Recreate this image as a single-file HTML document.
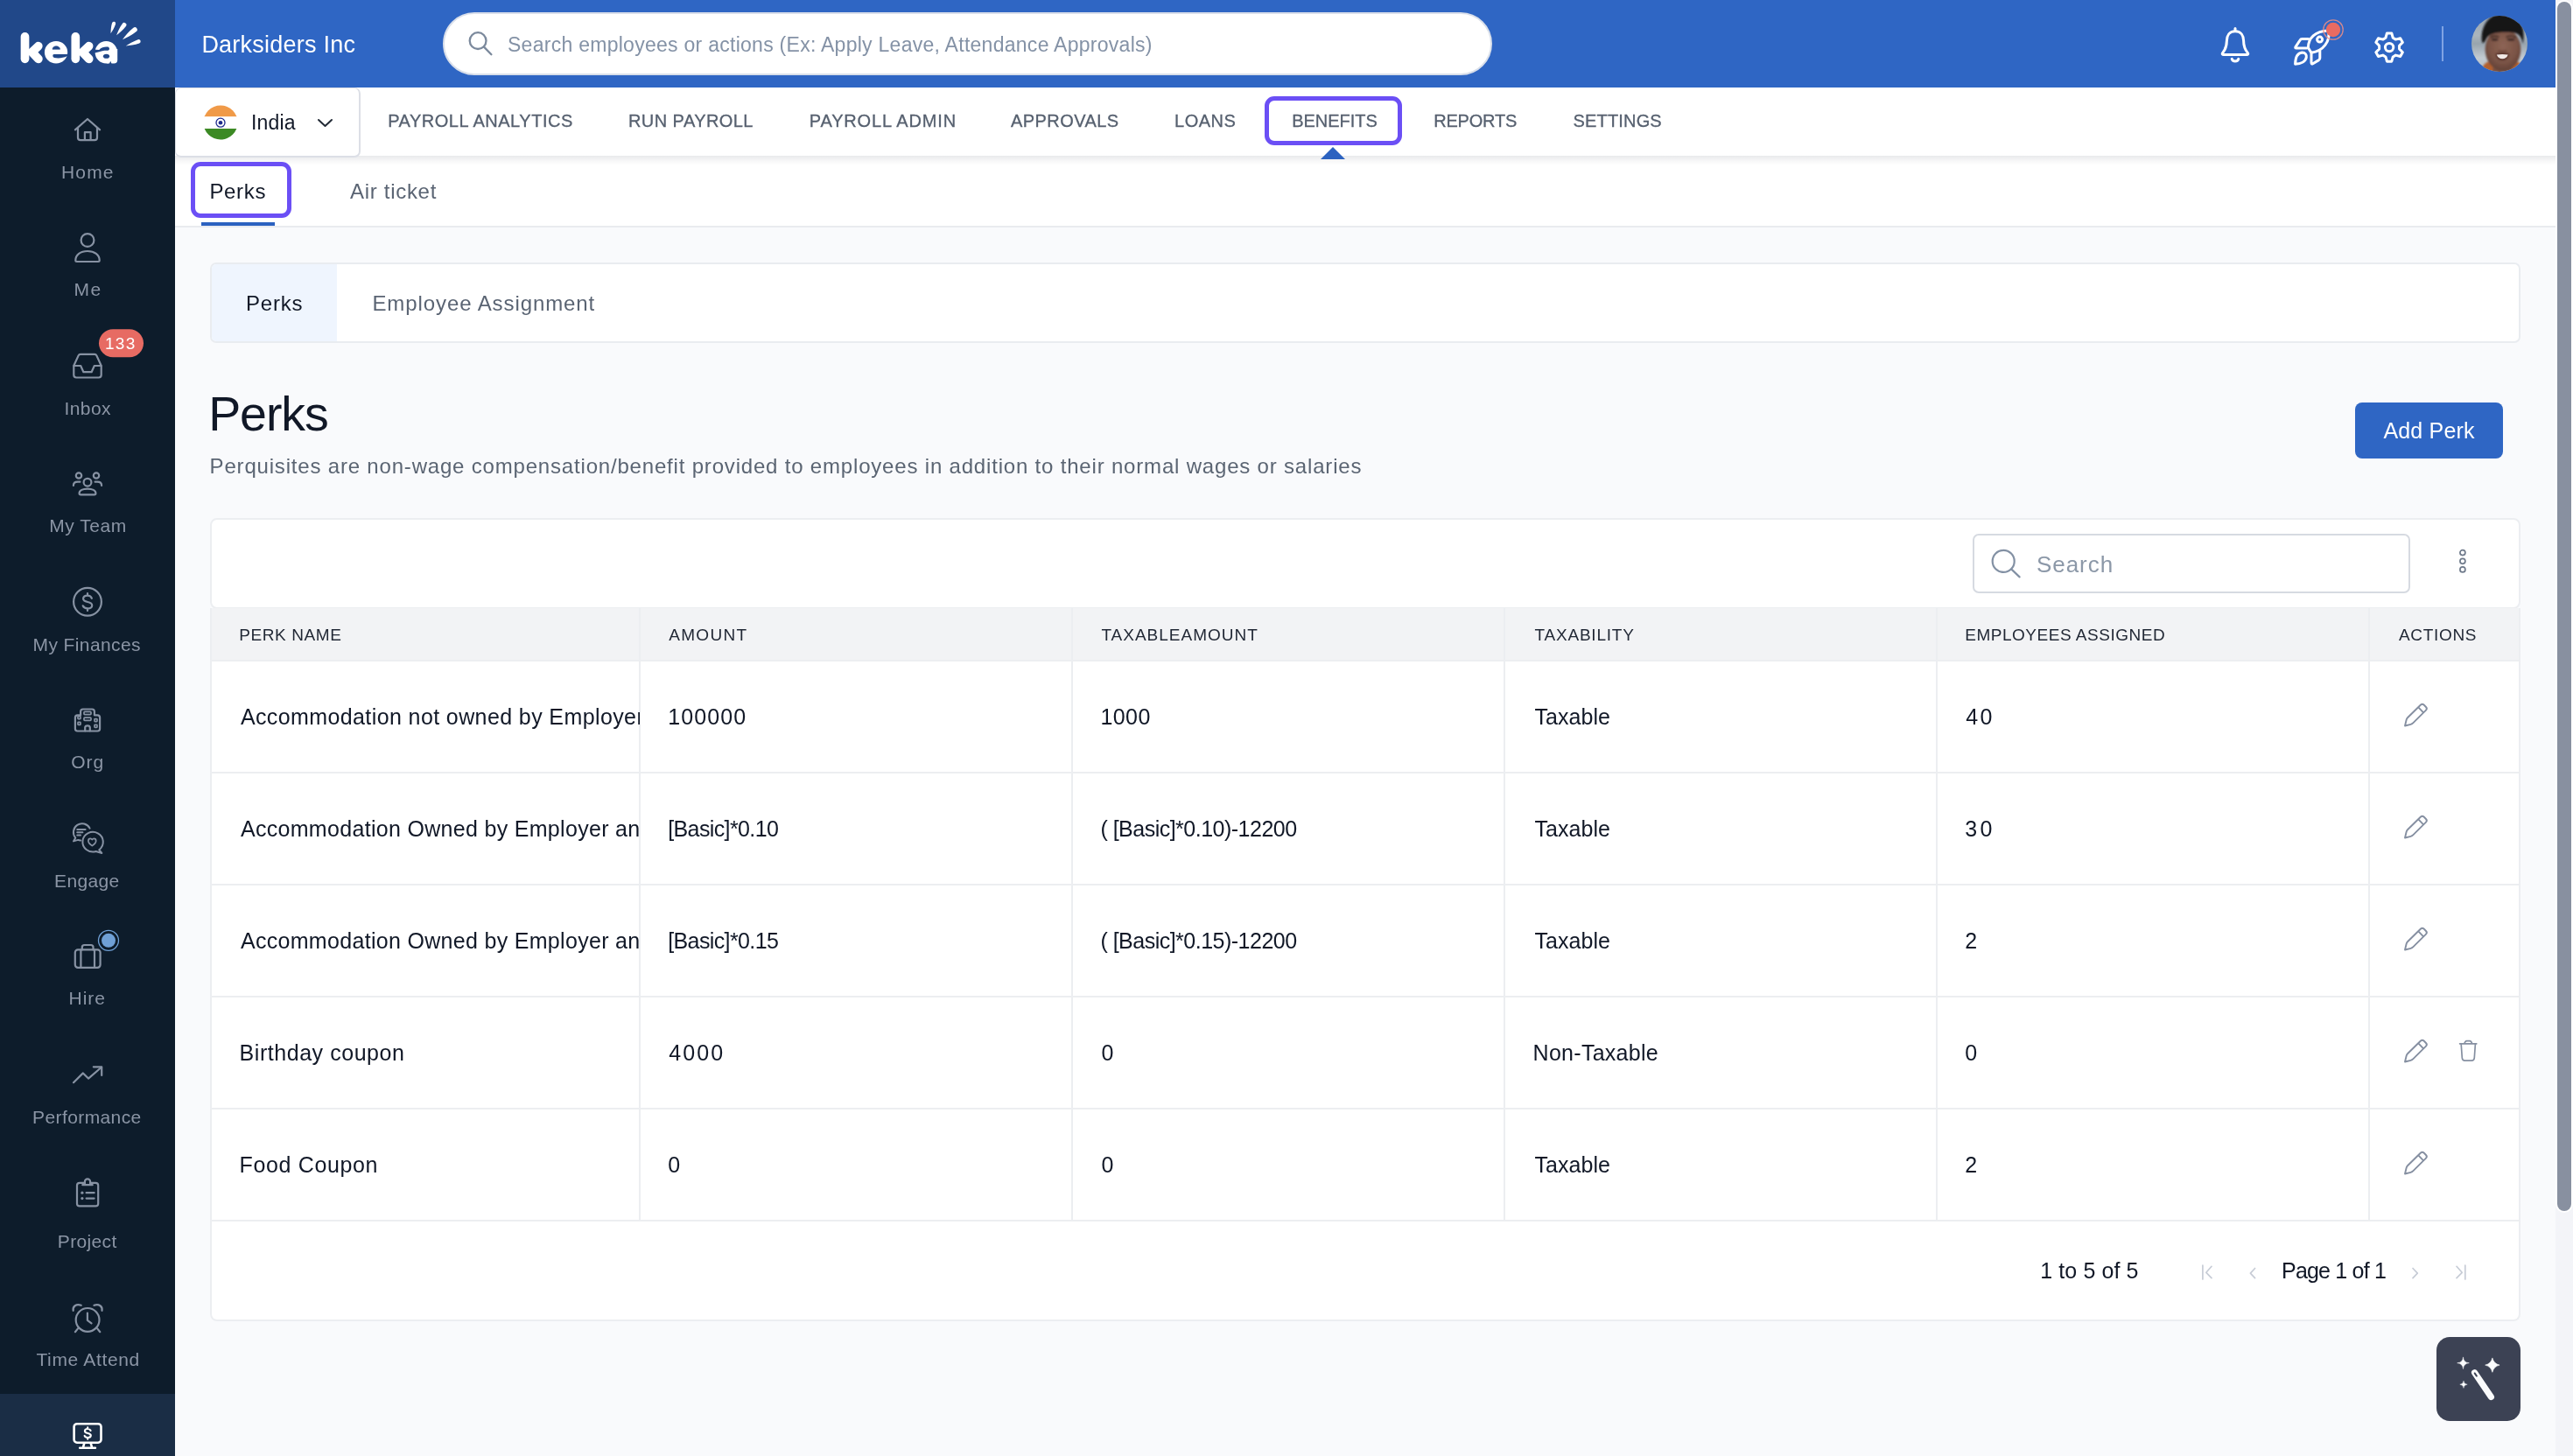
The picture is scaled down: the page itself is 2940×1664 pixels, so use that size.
<!DOCTYPE html>
<html lang="en">
<head>
<meta charset="utf-8">
<title>Keka - Payroll - Benefits - Perks</title>
<style>
*{box-sizing:border-box;margin:0;padding:0}
html,body{width:2940px;height:1664px;overflow:hidden}
body{position:relative;background:#f9fafc;font-family:"Liberation Sans",sans-serif;-webkit-font-smoothing:antialiased}
.a{position:absolute}
.t{position:absolute;white-space:nowrap;line-height:1;font-kerning:normal}
.t.clip{overflow:hidden;height:32px}
svg{position:absolute;overflow:visible}
.si{fill:none;stroke:#8792a3;stroke-width:2.2;stroke-linecap:round;stroke-linejoin:round}
.vl{position:absolute;width:2px;background:#eceef1;top:695px;height:700px}
.hl{position:absolute;height:2px;background:#eceef1;left:241px;width:2638px}
</style>
</head>
<body>

<!-- ============ SIDEBAR ============ -->
<div class="a" style="left:0;top:0;width:200px;height:1664px;background:#0d1c2b"></div>
<div class="a" style="left:0;top:0;width:200px;height:100px;background:#214889"></div>
<div class="a" style="left:0;top:1593px;width:200px;height:71px;background:#1a2d45"></div>
<svg style="left:0;top:0" width="200" height="100" viewBox="0 0 200 100">
<g fill="none" stroke="#fff" stroke-width="9.7" stroke-linecap="round" stroke-linejoin="round"><path d="M28.5 41.9 V67.3" /><path d="M43.8 52.7 L36.6 59.6 L43.9 67.4" /><path d="M86.3 41.9 V67.3" /><path d="M101.6 52.7 L94.4 59.6 L101.7 67.4" /></g>
<ellipse cx="64.05" cy="59.75" rx="13.15" ry="12.75" fill="#fff"/>
<path d="M60 56.3 C60 51.6 68.5 51.6 68.5 56.3 Z" fill="#214889" stroke="#214889" stroke-width=".6" stroke-linejoin="round"/>
<path d="M61.6 62.1 H79 V64 L76.4 64.3 C72.5 66.5 66 66.8 62 66 C59.9 65.4 59.9 62.1 61.6 62.1 Z" fill="#214889"/>
<ellipse cx="121.3" cy="59.7" rx="12.7" ry="12.75" fill="#fff"/>
<path d="M122 56 H134.2 V68.4 Q134.2 72.4 130.2 72.4 H122 Z" fill="#fff"/>
<path d="M106 56.6 L113.2 56.9 C116 53.8 120.5 53.1 123.2 53.6 C125.6 54.2 125.6 57.7 123.2 57.7 C119 57.5 115.5 58.2 113.4 59.2 L106 61 Z" fill="#214889"/>
<ellipse cx="121.5" cy="64.3" rx="3.6" ry="2.55" fill="#214889"/>
<path d="M124.6 73.5 L126.2 69.8 L127.8 73.5 Z" fill="#214889"/>
<g fill="#fff">
<path d="M126.50 38.20 C128.27 35.52 130.81 31.46 132.08 27.43 A2.1 2.1 0 0 0 128.07 26.18 C126.81 30.20 126.58 34.99 126.50 38.20 Z"/>
<path d="M133.10 40.30 C136.21 37.89 140.77 34.21 143.91 30.00 A2.5 2.5 0 0 0 139.90 27.01 C136.76 31.21 134.52 36.64 133.10 40.30 Z"/>
<path d="M140.00 45.20 C144.27 43.22 150.60 40.16 155.78 36.00 A2.7 2.7 0 0 0 152.40 31.78 C147.22 35.94 142.85 41.46 140.00 45.20 Z"/>
<path d="M143.80 52.50 C147.82 52.11 153.80 51.43 159.19 49.53 A2.3 2.3 0 0 0 157.67 45.19 C152.28 47.08 147.18 50.29 143.80 52.50 Z"/>
</g></svg>
<svg style="left:0;top:0" width="200" height="1664" viewBox="0 0 200 1664">
<g class="si">
<!-- home -->
<path d="M85.9 148.3 L100 136 L114.1 148.3"/>
<path d="M89 146 V157.3 Q89 160.2 91.9 160.2 H108.1 Q111 160.2 111 157.3 V146"/>
<path d="M96.9 160 V151.2 H103.6 V160"/>
<!-- me -->
<circle cx="100" cy="274.5" r="7.4"/>
<path d="M86.3 297.6 C86.3 291 92 287 100 287 C108 287 113.7 291 113.7 297.6 Q113.7 299 112.2 299 H87.8 Q86.3 299 86.3 297.6 Z"/>
<!-- inbox -->
<path d="M84.3 418 L89.6 406.4 Q90.3 404.8 92 404.8 H108 Q109.7 404.8 110.4 406.4 L115.7 418 V428.6 Q115.7 431.5 112.8 431.5 H87.2 Q84.3 431.5 84.3 428.6 Z"/>
<path d="M84.5 418 H92.2 L95.4 425.2 H104.6 L107.8 418 H115.5"/>
<!-- my team -->
<circle cx="90" cy="543.5" r="3.2"/><circle cx="110" cy="543.5" r="3.2"/>
<circle cx="100" cy="551.2" r="4.4"/>
<path d="M90.6 563.8 C90.6 560.6 94.5 558.6 100 558.6 C105.5 558.6 109.4 560.6 109.4 563.8 Q109.4 565.4 107.8 565.4 H92.2 Q90.6 565.4 90.6 563.8 Z"/>
<path d="M83.9 555 C83.9 552.2 86 550.7 88.8 550.7 H91.4"/><path d="M116.1 555 C116.1 552.2 114 550.7 111.2 550.7 H108.6"/>
<!-- my finances -->
<circle cx="100" cy="687.8" r="15.9"/>
<path d="M104.9 683.8 C104.1 681.7 102.3 680.7 100 680.7 C97 680.7 95.1 682.1 95.1 684.3 C95.1 689.4 105.2 686.5 105.2 691.7 C105.2 694 103 695.4 100 695.4 C97.5 695.4 95.6 694.3 94.7 692.3 M100 678.2 V680.7 M100 695.4 V697.9"/>
<!-- org -->
<path d="M85.9 832.8 V820 Q85.9 817.3 88.6 817.3 H92.1 V813.2 Q92.1 810.5 94.8 810.5 H105.2 Q107.9 810.5 107.9 813.2 V817.3 H111.4 Q114.1 817.3 114.1 820 V832.8 Q114.1 835.5 111.4 835.5 H88.6 Q85.9 835.5 85.9 832.8 Z"/>
<path d="M97.2 835.3 V831.6 Q97.2 829.3 100 829.3 Q102.8 829.3 102.8 831.6 V835.3"/>
</g>
<g fill="none" stroke="#8792a3" stroke-width="1.7" stroke-linejoin="round">
<rect x="96" y="813.4" width="8" height="3.2" rx=".8"/><rect x="96" y="820.2" width="8" height="3.2" rx=".8"/>
<rect x="89" y="818.6" width="3" height="3" rx=".6"/><rect x="89" y="825.4" width="3" height="3" rx=".6"/>
<rect x="108" y="821.6" width="3" height="3" rx=".6"/><rect x="108" y="828.4" width="3" height="3" rx=".6"/>
</g>
<g class="si" style="stroke-width:2">
<!-- engage -->
<path d="M102.6 946.6 A9.9 9.9 0 1 0 86.3 957.6 L84 961.4 L89.3 959.9 Q90.6 960.6 92.2 960.5"/>
<path d="M88.2 948 H97.6 M88.2 951.3 H94.4 M88.2 954.6 H92"/>
<path d="M113.2 971.2 A11.7 11.3 0 1 0 109.6 973 L116.3 975 L113.2 971.2 Z"/>
<path d="M105.3 966.6 C102.6 964.8 100.9 963 100.9 961 C100.9 959.4 102.1 958.4 103.3 958.4 C104.2 958.4 104.9 958.9 105.3 959.6 C105.7 958.9 106.4 958.4 107.3 958.4 C108.5 958.4 109.7 959.4 109.7 961 C109.7 963 108 964.8 105.3 966.6 Z" style="stroke-width:1.7"/>
</g>
<g class="si">
<!-- hire -->
<rect x="85.8" y="1085.4" width="28.8" height="20.4" rx="3.2"/>
<path d="M93.8 1085.4 V1082.6 Q93.8 1080 96.4 1080 H103.9 Q106.5 1080 106.5 1082.6 V1085.4"/>
<path d="M92.4 1085.6 V1105.6 M108 1085.6 V1105.6"/>
<!-- performance -->
<path d="M84 1237.2 L94.9 1226.4 L101 1232.6 L115.6 1220"/>
<path d="M106.8 1219.3 H116.2 V1229"/>
<!-- project -->
<path d="M96.6 1351.8 H91 Q88 1351.8 88 1354.8 V1375.4 Q88 1378.4 91 1378.4 H109.2 Q112.2 1378.4 112.2 1375.4 V1354.8 Q112.2 1351.8 109.2 1351.8 H103.4"/>
<path d="M94.3 1354.2 H105.7 M96.9 1353.6 V1350.4 A3.1 3.1 0 0 1 103.1 1350.4 V1353.6"/>
<path d="M98.6 1363.2 H107.6 M98.6 1369.6 H107.6"/>
<!-- time attend -->
<circle cx="100.1" cy="1508.4" r="13.4"/>
<path d="M83.7 1497.8 C82.8 1493.2 87 1489.6 92.7 1491.8"/><path d="M116.5 1497.8 C117.4 1493.2 113.2 1489.6 107.5 1491.8"/>
<path d="M89 1518.4 L85.9 1522.2 M111.2 1518.4 L114.3 1522.2"/>
<path d="M99.9 1500.6 V1508.9 L104.5 1512.4"/>
</g>
<circle cx="93.9" cy="1363.2" r="1.6" fill="#8792a3"/><circle cx="93.9" cy="1369.6" r="1.6" fill="#8792a3"/>
<!-- inbox badge -->
<rect x="113" y="376.2" width="51" height="32" rx="16" fill="#e76b63"/>
<!-- hire dot -->
<circle cx="124" cy="1074.8" r="8" fill="#6fa0d6"/><circle cx="124" cy="1074.8" r="11.5" fill="none" stroke="#6fa0d6" stroke-width="1.3"/>
<!-- payroll (active) -->
<g fill="none" stroke="#fff" stroke-width="2.6" stroke-linecap="round" stroke-linejoin="round">
<rect x="84.6" y="1627.2" width="30.9" height="21.5" rx="3.4"/>
<path d="M96.3 1649.4 L94.9 1654.4 M103.7 1649.4 L105.1 1654.4 M91.2 1654.8 H108.9"/>
<path d="M103.6 1635 C103 1633.6 101.7 1633 100.2 1633 C98.2 1633 96.9 1634 96.9 1635.5 C96.9 1638.9 103.8 1637 103.8 1640.5 C103.8 1642.1 102.3 1643 100.2 1643 C98.5 1643 97.2 1642.3 96.6 1640.9 M100.2 1631.4 V1633 M100.2 1643 V1644.8" style="stroke-width:2.1"/>
</g>
</svg>


<!-- ============ TOP HEADER ============ -->
<div class="a" style="left:200px;top:0;width:2720px;height:100px;background:#2f66c4"></div>
<div class="a" style="left:506px;top:14px;width:1199px;height:72px;border-radius:36px;background:#fff;border:2px solid #d9dfea"></div>
<!-- global search icon -->
<svg style="left:530px;top:32px" width="40" height="40" viewBox="0 0 40 40"><circle cx="16.1" cy="14.6" r="9.4" fill="none" stroke="#7b899c" stroke-width="2.3"/><path d="M23 21.6 L31.4 30.2" stroke="#7b899c" stroke-width="2.3" stroke-linecap="round"/></svg>
<!-- bell -->
<svg style="left:2536px;top:30px" width="36" height="44" viewBox="0 0 36 44" fill="none" stroke="#fff" stroke-width="3" stroke-linecap="round" stroke-linejoin="round">
<path d="M18 2.6 V5.5"/>
<path d="M18 5.8 C11.2 5.8 8.4 11 8.4 16.5 C8.4 23.5 6.6 27 3.6 30.6 C2.9 31.6 3.4 32.6 4.8 32.6 H31.2 C32.6 32.6 33.1 31.6 32.4 30.6 C29.4 27 27.6 23.5 27.6 16.5 C27.6 11 24.8 5.8 18 5.8 Z"/>
<path d="M14.2 37.4 C15 40.8 21 40.8 21.8 37.4"/>
</svg>
<!-- rocket -->
<svg style="left:2620px;top:30px" width="46" height="46" viewBox="0 0 46 46" fill="none" stroke="#fff" stroke-width="3" stroke-linecap="round" stroke-linejoin="round">
<path d="M17.4 24.4 C17.5 13.5 25 5.5 40.7 4.9 C42.8 17 35 28.5 20.9 30.2 Z"/>
<circle cx="30.6" cy="15.1" r="3"/>
<path d="M17.8 14.6 H10.4 Q8.8 14.6 8 16 L3 23.6 Q2.2 25 3.8 25 H15.6"/>
<path d="M21 31.2 V41.6 Q21 43.8 22.8 42.8 L29.6 38.6 Q30.8 37.8 30.8 36.2 V28"/>
<path d="M2.6 43.2 C2.8 36 5 30.5 10.5 30 C14 30 15.8 32.5 15.3 35.5 C14.5 40 9.5 43 2.6 43.2 Z"/>
</svg>
<svg style="left:2650px;top:18px" width="32" height="32" viewBox="0 0 32 32"><circle cx="16" cy="16" r="8.2" fill="#e96b62"/><circle cx="16" cy="16" r="11.2" fill="none" stroke="#ef8f86" stroke-opacity=".85" stroke-width="1.3"/></svg>
<!-- gear -->
<svg style="left:2710px;top:34px" width="40" height="40" viewBox="0 0 40 40" fill="none" stroke="#fff" stroke-width="3" stroke-linejoin="round">
<path d="M24.26 9.27 L22.79 4.02 L17.41 4.02 L15.94 9.27 L12.80 11.09 L7.52 9.73 L4.83 14.39 L8.64 18.29 L8.64 21.91 L4.83 25.81 L7.52 30.47 L12.80 29.11 L15.94 30.93 L17.41 36.18 L22.79 36.18 L24.26 30.93 L27.40 29.11 L32.68 30.47 L35.37 25.81 L31.56 21.91 L31.56 18.29 L35.37 14.39 L32.68 9.73 L27.40 11.09 Z"/><circle cx="20.1" cy="20.1" r="4.7"/>
</svg>
<div class="a" style="left:2790px;top:30px;width:2px;height:40px;background:#7fa3e3"></div>
<!-- avatar -->
<svg style="left:2824px;top:18px" width="64" height="64" viewBox="0 0 64 64">
<defs><clipPath id="av"><circle cx="32" cy="32" r="32"/></clipPath>
<linearGradient id="abg" x1="0" y1="0" x2="0" y2="1"><stop offset="0" stop-color="#9aa6b0"/><stop offset=".35" stop-color="#aab5bd"/><stop offset=".5" stop-color="#98a4ad"/><stop offset=".75" stop-color="#c3cbd2"/><stop offset="1" stop-color="#b4bec6"/></linearGradient>
<radialGradient id="skin" cx="50%" cy="42%" r="60%"><stop offset="0" stop-color="#8d6455"/><stop offset=".65" stop-color="#7b5446"/><stop offset="1" stop-color="#5f3f35"/></radialGradient>
<filter id="bl" x="-10%" y="-10%" width="120%" height="120%"><feGaussianBlur stdDeviation="1.25"/></filter></defs>
<g clip-path="url(#av)">
<rect width="64" height="64" fill="url(#abg)"/>
<g filter="url(#bl)">
<path d="M13 58 C16 52 22 51.5 26 54 L44 54 C48 51.5 55 52 58 57 L60 70 H8 Z" fill="#b2612f"/>
<path d="M25 50 H46 L47 66 H24 Z" fill="#7a5245"/>
<ellipse cx="36" cy="38.5" rx="20.3" ry="24.5" fill="url(#skin)"/>
<path d="M12.2 30.5 C9 14 20 -3 36 -3 C53 -3 63 12 58.8 32 C57.8 27 56 22.6 52 20.4 C45 18 32 18.6 25.5 20.2 C20.5 21.6 17.6 24 16.6 27 C15.6 29.2 14.6 30.6 13.5 31 Z" fill="#141419"/>
<path d="M21.5 24.6 C25 23 29 23.2 31.5 24.4 M39.5 24.4 C43 23 48 23 51 24.8" stroke="#2a1b18" stroke-width="1.6" fill="none" opacity=".85"/>
<ellipse cx="26.6" cy="27.3" rx="4" ry="1.2" fill="#24171a" opacity=".9"/><ellipse cx="45" cy="27.3" rx="4.5" ry="1.2" fill="#24171a" opacity=".9"/>
<path d="M30.5 39.5 C33 41 38 41 40.5 39.5" stroke="#5a382e" stroke-width="1.3" fill="none" opacity=".8"/>
<path d="M27.6 43.2 C32 42 39 42 43 43.2 C42 49.6 38.6 51 35.3 51 C32 51 28.6 49.6 27.6 43.2 Z" fill="#56332b"/>
</g>
<path d="M28.8 44.5 Q35.3 43.3 41.8 44.5 Q40 49.2 35.3 49.3 Q30.6 49.2 28.8 44.5 Z" fill="#f1e9e6" filter="url(#bl2)"/>
</g>
<defs><filter id="bl2"><feGaussianBlur stdDeviation=".55"/></filter></defs>
</svg>

<!-- ============ NAV ROW ============ -->
<div class="a" style="left:200px;top:178px;width:2720px;height:82px;background:#fff;border-bottom:2px solid #e9ebef"></div>
<div class="a" style="left:200px;top:100px;width:2720px;height:78px;background:#fff"></div>
<div class="a" style="left:200px;top:178px;width:2720px;height:11px;background:linear-gradient(rgba(45,50,70,.105),rgba(45,50,70,.03) 60%,rgba(45,50,70,0))"></div>
<div class="a" style="left:200px;top:100px;width:212px;height:80px;background:#fff;border:2px solid #dcdfe6;border-left-width:1.6px;border-top-width:1.6px;border-radius:7px"></div>
<svg style="left:232px;top:120px" width="40" height="40" viewBox="0 0 40 40">
<defs><clipPath id="fc"><circle cx="20" cy="20" r="19.6"/></clipPath></defs>
<g clip-path="url(#fc)"><rect width="40" height="13.4" fill="#f09a48"/><rect y="13.4" width="40" height="13.6" fill="#fff"/><rect y="27" width="40" height="13" fill="#3c8a24"/></g>
<circle cx="20" cy="20.2" r="5" fill="none" stroke="#1d2a8c" stroke-width="1.3"/><circle cx="20" cy="20.2" r="2.3" fill="#1d2a8c"/>
</svg>
<svg style="left:363px;top:136px" width="17" height="9" viewBox="0 0 17 9"><path d="M1 1 L8.5 8 L16 1" fill="none" stroke="#222a36" stroke-width="2" stroke-linecap="round" stroke-linejoin="round"/></svg>
<!-- benefits highlight -->
<div class="a" style="left:1445px;top:110px;width:157px;height:56px;border:5px solid #6b4ff5;border-radius:11px"></div>
<svg style="left:1509px;top:168px" width="28" height="14" viewBox="0 0 28 14"><path d="M0 14 L14 0 L28 14 Z" fill="#2c62c0"/></svg>

<!-- ============ SUB TABS ============ -->
<div class="a" style="left:218px;top:185px;width:115px;height:64px;border:5px solid #6b4ff5;border-radius:11px"></div>
<div class="a" style="left:230px;top:254px;width:84px;height:4px;background:#2c62c0"></div>

<!-- ============ INNER TABS CARD ============ -->
<div class="a" style="left:240px;top:300px;width:2640px;height:92px;background:#fff;border:2px solid #e9ecf0;border-radius:7px"></div>
<div class="a" style="left:242px;top:302px;width:143px;height:88px;background:#eff5fe;border-radius:5px 0 0 5px"></div>

<!-- ============ ADD PERK ============ -->
<div class="a" style="left:2691px;top:460px;width:169px;height:64px;background:#2f66c4;border-radius:8px"></div>

<!-- ============ TABLE ============ -->
<div class="a" style="left:240px;top:592px;width:2640px;height:104px;background:#fff;border:2px solid #eceef1;border-radius:8px"></div>
<div class="a" style="left:240px;top:695px;width:2640px;height:815px;background:#fff;border:2px solid #eceef1;border-top:none;border-radius:0 0 8px 8px"></div>
<div class="a" style="left:242px;top:695px;width:2636px;height:59px;background:#f2f3f5"></div>
<div class="hl" style="top:754px"></div>
<div class="hl" style="top:882px"></div>
<div class="hl" style="top:1010px"></div>
<div class="hl" style="top:1138px"></div>
<div class="hl" style="top:1266px"></div>
<div class="hl" style="top:1394px"></div>
<div class="vl" style="left:730px"></div>
<div class="vl" style="left:1224px"></div>
<div class="vl" style="left:1718px"></div>
<div class="vl" style="left:2212px"></div>
<div class="vl" style="left:2706px"></div>
<!-- table search -->
<div class="a" style="left:2254px;top:610px;width:500px;height:68px;background:#fff;border:2px solid #d6dae1;border-radius:7px"></div>
<!-- table search icon + kebab -->
<svg style="left:2270px;top:620px" width="44" height="44" viewBox="0 0 44 44"><circle cx="19.2" cy="21.4" r="12.5" fill="none" stroke="#8391a4" stroke-width="2.2"/><path d="M28.4 30.6 L37.6 39.4" stroke="#8391a4" stroke-width="2.2" stroke-linecap="round"/></svg>
<svg style="left:2806px;top:624px" width="16" height="34" viewBox="0 0 16 34" fill="none" stroke="#6f7a8b" stroke-width="1.7"><circle cx="7.9" cy="7.6" r="3"/><circle cx="7.9" cy="17.3" r="3"/><circle cx="7.9" cy="26.9" r="3"/></svg>
<svg style="left:2746.8px;top:803.6px" width="28" height="28" viewBox="0 0 28 28" fill="none" stroke="#858fa1" stroke-width="1.9" stroke-linejoin="round" stroke-linecap="round"><path d="M1 25.5 L2.6 18.8 Q3 17.2 4.2 16 L19 1.5 Q20.8 -0.2 22.6 1.5 L25 4 Q26.8 5.8 25 7.6 L10.4 22.2 Q9.2 23.4 7.6 23.8 Z M16.6 4.6 L21.6 9.8"/></svg>
<svg style="left:2746.8px;top:931.6px" width="28" height="28" viewBox="0 0 28 28" fill="none" stroke="#858fa1" stroke-width="1.9" stroke-linejoin="round" stroke-linecap="round"><path d="M1 25.5 L2.6 18.8 Q3 17.2 4.2 16 L19 1.5 Q20.8 -0.2 22.6 1.5 L25 4 Q26.8 5.8 25 7.6 L10.4 22.2 Q9.2 23.4 7.6 23.8 Z M16.6 4.6 L21.6 9.8"/></svg>
<svg style="left:2746.8px;top:1059.6px" width="28" height="28" viewBox="0 0 28 28" fill="none" stroke="#858fa1" stroke-width="1.9" stroke-linejoin="round" stroke-linecap="round"><path d="M1 25.5 L2.6 18.8 Q3 17.2 4.2 16 L19 1.5 Q20.8 -0.2 22.6 1.5 L25 4 Q26.8 5.8 25 7.6 L10.4 22.2 Q9.2 23.4 7.6 23.8 Z M16.6 4.6 L21.6 9.8"/></svg>
<svg style="left:2746.8px;top:1187.6px" width="28" height="28" viewBox="0 0 28 28" fill="none" stroke="#858fa1" stroke-width="1.9" stroke-linejoin="round" stroke-linecap="round"><path d="M1 25.5 L2.6 18.8 Q3 17.2 4.2 16 L19 1.5 Q20.8 -0.2 22.6 1.5 L25 4 Q26.8 5.8 25 7.6 L10.4 22.2 Q9.2 23.4 7.6 23.8 Z M16.6 4.6 L21.6 9.8"/></svg>
<svg style="left:2746.8px;top:1315.6px" width="28" height="28" viewBox="0 0 28 28" fill="none" stroke="#858fa1" stroke-width="1.9" stroke-linejoin="round" stroke-linecap="round"><path d="M1 25.5 L2.6 18.8 Q3 17.2 4.2 16 L19 1.5 Q20.8 -0.2 22.6 1.5 L25 4 Q26.8 5.8 25 7.6 L10.4 22.2 Q9.2 23.4 7.6 23.8 Z M16.6 4.6 L21.6 9.8"/></svg>
<svg style="left:2809.8px;top:1189px" width="22" height="25" viewBox="0 0 22 25" fill="none" stroke="#858fa1" stroke-width="1.7" stroke-linejoin="round" stroke-linecap="round"><path d="M0.6 3.8 H19.8 M5.8 3.6 L7 1.4 Q7.6 0.6 8.6 0.6 H12 Q13 0.6 13.6 1.4 L14.8 3.6 M2.2 4.2 L3.3 20 Q3.6 23.1 6.4 23.1 H14.2 Q17 23.1 17.3 20 L18.4 4.2"/></svg>
<!-- pagination chevrons -->
<svg style="left:2500px;top:1425px" width="340" height="60" viewBox="2500 1425 340 60" fill="none" stroke="#c7ccd6" stroke-width="1.7" stroke-linecap="round" stroke-linejoin="round">
<path d="M2516.9 1446 V1462 M2527 1447.3 L2520.9 1454.3 L2527 1460.7"/>
<path d="M2576.6 1449.5 L2571.4 1455.1 L2576.6 1460.7"/>
<path d="M2757 1449.5 L2762.3 1455.1 L2757 1460.7"/>
<path d="M2807 1447.3 L2813.2 1454.3 L2807 1460.7 M2816.8 1446 V1462"/>
</svg>

<!-- ============ MAGIC BUTTON ============ -->
<div class="a" style="left:2784px;top:1528px;width:96px;height:96px;background:#3c4254;border-radius:15px"></div>
<svg style="left:2784px;top:1528px" width="96" height="96" viewBox="2784 1528 96 96">
<path d="M2827.6 1568.7 L2846.4 1596.4" stroke="#fafbfc" stroke-width="7.2" stroke-linecap="round" fill="none"/>
<path d="M2827.7 1569.4 L2829.9 1572.6" stroke="#3c4254" stroke-width="1.9" stroke-linecap="round" fill="none"/>
<path d="M2814.5 1550.9 Q2814.95 1557.25 2821.3 1557.7 Q2814.95 1558.15 2814.5 1564.5 Q2814.05 1558.15 2807.7 1557.7 Q2814.05 1557.25 2814.5 1550.9 Z" fill="#fafbfc" stroke="#fafbfc" stroke-width=".5" stroke-linejoin="round"/>
<path d="M2847.9 1551.8999999999999 Q2849.5 1558.5 2856.1 1560.1 Q2849.5 1561.6999999999998 2847.9 1568.3 Q2846.3 1561.6999999999998 2839.7000000000003 1560.1 Q2846.3 1558.5 2847.9 1551.8999999999999 Z" fill="#fafbfc" stroke="#fafbfc" stroke-width=".6" stroke-linejoin="round"/>
<path d="M2815 1578.0 Q2815.3 1581.9 2819.2 1582.2 Q2815.3 1582.5 2815 1586.4 Q2814.7 1582.5 2810.8 1582.2 Q2814.7 1581.9 2815 1578.0 Z" fill="#fafbfc" stroke="#fafbfc" stroke-width=".4" stroke-linejoin="round"/>
</svg>

<!-- ============ SCROLLBAR ============ -->
<div class="a" style="left:2920px;top:0;width:20px;height:1664px;background:#f3f4f8"></div>
<div class="a" style="left:2922px;top:2px;width:16px;height:1382px;background:#8890a0;border-radius:8px;box-shadow:0 0 0 2px #fff"></div>

<!-- ============ TEXT ============ -->
<div class="a" style="left:0;top:0;width:2940px;height:1664px;will-change:transform">
<span class="t" id="org" style="left:230.4px;top:37.5px;font-size:27px;color:#ffffff;letter-spacing:0.227px;">Darksiders Inc</span>
<span class="t" id="gsearch" style="left:580.0px;top:39.5px;font-size:23px;color:#8492a6;letter-spacing:0.272px;">Search employees or actions (Ex: Apply Leave, Attendance Approvals)</span>
<span class="t" id="india" style="left:287.0px;top:129.0px;font-size:23px;color:#111827;letter-spacing:0.156px;">India</span>
<span class="t" id="n1" style="left:443.2px;top:128.2px;font-size:20px;color:#56606f;letter-spacing:0.527px;-webkit-text-stroke:.3px #56606f;">PAYROLL ANALYTICS</span>
<span class="t" id="n2" style="left:718.0px;top:128.2px;font-size:20px;color:#56606f;letter-spacing:0.431px;-webkit-text-stroke:.3px #56606f;">RUN PAYROLL</span>
<span class="t" id="n3" style="left:924.8px;top:128.2px;font-size:20px;color:#56606f;letter-spacing:0.821px;-webkit-text-stroke:.3px #56606f;">PAYROLL ADMIN</span>
<span class="t" id="n4" style="left:1155.0px;top:128.2px;font-size:20px;color:#56606f;letter-spacing:0.427px;-webkit-text-stroke:.3px #56606f;">APPROVALS</span>
<span class="t" id="n5" style="left:1342.0px;top:128.2px;font-size:20px;color:#56606f;letter-spacing:0.522px;-webkit-text-stroke:.3px #56606f;">LOANS</span>
<span class="t" id="n6" style="left:1476.2px;top:128.2px;font-size:20px;color:#56606f;letter-spacing:-0.014px;-webkit-text-stroke:.3px #56606f;">BENEFITS</span>
<span class="t" id="n7" style="left:1638.2px;top:128.2px;font-size:20px;color:#56606f;letter-spacing:-0.205px;-webkit-text-stroke:.3px #56606f;">REPORTS</span>
<span class="t" id="n8" style="left:1797.6px;top:128.2px;font-size:20px;color:#56606f;letter-spacing:0.155px;-webkit-text-stroke:.3px #56606f;">SETTINGS</span>
<span class="t" id="st1" style="left:239.4px;top:206.8px;font-size:24px;color:#111827;letter-spacing:0.685px;">Perks</span>
<span class="t" id="st2" style="left:400.0px;top:206.8px;font-size:24px;color:#5a6473;letter-spacing:0.698px;">Air ticket</span>
<span class="t" id="it1" style="left:281.0px;top:335.0px;font-size:24px;color:#111827;letter-spacing:0.785px;">Perks</span>
<span class="t" id="it2" style="left:425.4px;top:335.0px;font-size:24px;color:#5a6473;letter-spacing:0.913px;">Employee Assignment</span>
<span class="t" id="h1" style="left:238.2px;top:445.9px;font-size:55.5px;color:#111827;letter-spacing:-1.094px;">Perks</span>
<span class="t" id="sub" style="left:239.6px;top:521.1px;font-size:24px;color:#5b6573;letter-spacing:0.814px;">Perquisites are non-wage compensation/benefit provided to employees in addition to their normal wages or salaries</span>
<span class="t" id="addperk" style="left:2723.4px;top:480.4px;font-size:25px;color:#ffffff;letter-spacing:0.179px;">Add Perk</span>
<span class="t" id="tsearch" style="left:2327.0px;top:632.2px;font-size:26px;color:#8c98a8;letter-spacing:0.942px;">Search</span>
<span class="t" id="th1" style="left:273.2px;top:716.1px;font-size:19px;color:#1f2633;letter-spacing:0.597px;">PERK NAME</span>
<span class="t" id="th2" style="left:764.2px;top:716.1px;font-size:19px;color:#1f2633;letter-spacing:1.314px;">AMOUNT</span>
<span class="t" id="th3" style="left:1258.4px;top:716.1px;font-size:19px;color:#1f2633;letter-spacing:1.003px;">TAXABLEAMOUNT</span>
<span class="t" id="th4" style="left:1753.6px;top:716.1px;font-size:19px;color:#1f2633;letter-spacing:0.778px;">TAXABILITY</span>
<span class="t" id="th5" style="left:2245.2px;top:716.1px;font-size:19px;color:#1f2633;letter-spacing:0.521px;">EMPLOYEES ASSIGNED</span>
<span class="t" id="th6" style="left:2741.0px;top:716.1px;font-size:19px;color:#1f2633;letter-spacing:0.674px;">ACTIONS</span>
<span class="t" id="r0a" style="left:763.2px;top:807.4px;font-size:25px;color:#111827;letter-spacing:1.093px;">100000</span>
<span class="t" id="r0b" style="left:1257.4px;top:807.4px;font-size:25px;color:#111827;letter-spacing:0.425px;">1000</span>
<span class="t" id="r0c" style="left:1753.6px;top:807.4px;font-size:25px;color:#111827;letter-spacing:0.021px;">Taxable</span>
<span class="t" id="r0d" style="left:2246.2px;top:807.4px;font-size:25px;color:#111827;letter-spacing:2.287px;">40</span>
<span class="t" id="r1a" style="left:763.2px;top:935.4px;font-size:25px;color:#111827;letter-spacing:-0.611px;">[Basic]*0.10</span>
<span class="t" id="r1b" style="left:1257.4px;top:935.4px;font-size:25px;color:#111827;letter-spacing:-0.508px;">( [Basic]*0.10)-12200</span>
<span class="t" id="r1c" style="left:1753.6px;top:935.4px;font-size:25px;color:#111827;letter-spacing:0.021px;">Taxable</span>
<span class="t" id="r1d" style="left:2245.2px;top:935.4px;font-size:25px;color:#111827;letter-spacing:3.287px;">30</span>
<span class="t" id="r2a" style="left:763.2px;top:1063.4px;font-size:25px;color:#111827;letter-spacing:-0.611px;">[Basic]*0.15</span>
<span class="t" id="r2b" style="left:1257.4px;top:1063.4px;font-size:25px;color:#111827;letter-spacing:-0.508px;">( [Basic]*0.15)-12200</span>
<span class="t" id="r2c" style="left:1753.6px;top:1063.4px;font-size:25px;color:#111827;letter-spacing:0.021px;">Taxable</span>
<span class="t" id="r2d" style="left:2245.2px;top:1063.4px;font-size:25px;color:#111827;letter-spacing:0.000px;">2</span>
<span class="t" id="r3a" style="left:764.2px;top:1191.4px;font-size:25px;color:#111827;letter-spacing:2.158px;">4000</span>
<span class="t" id="r3b" style="left:1258.4px;top:1191.4px;font-size:25px;color:#111827;letter-spacing:0.000px;">0</span>
<span class="t" id="r3c" style="left:1751.6px;top:1191.4px;font-size:25px;color:#111827;letter-spacing:0.274px;">Non-Taxable</span>
<span class="t" id="r3d" style="left:2245.2px;top:1191.4px;font-size:25px;color:#111827;letter-spacing:0.000px;">0</span>
<span class="t" id="r4a" style="left:763.2px;top:1319.4px;font-size:25px;color:#111827;letter-spacing:0.000px;">0</span>
<span class="t" id="r4b" style="left:1258.4px;top:1319.4px;font-size:25px;color:#111827;letter-spacing:0.000px;">0</span>
<span class="t" id="r4c" style="left:1753.6px;top:1319.4px;font-size:25px;color:#111827;letter-spacing:0.021px;">Taxable</span>
<span class="t" id="r4d" style="left:2245.2px;top:1319.4px;font-size:25px;color:#111827;letter-spacing:0.000px;">2</span>
<span class="t" id="r3n" style="left:273.6px;top:1191.4px;font-size:25px;color:#111827;letter-spacing:0.544px;">Birthday coupon</span>
<span class="t" id="r4n" style="left:273.6px;top:1319.4px;font-size:25px;color:#111827;letter-spacing:0.638px;">Food Coupon</span>
<span class="t" id="pg1" style="left:2331.2px;top:1440.2px;font-size:25px;color:#111827;letter-spacing:0.110px;">1 to 5 of 5</span>
<span class="t" id="pg2" style="left:2607.0px;top:1440.2px;font-size:25px;color:#111827;letter-spacing:-0.799px;">Page 1 of 1</span>
<span class="t" id="s1" style="left:70.0px;top:185.5px;font-size:21px;color:#8b95a5;letter-spacing:1.156px;">Home</span>
<span class="t" id="s2" style="left:84.4px;top:320.4px;font-size:21px;color:#8b95a5;letter-spacing:1.513px;">Me</span>
<span class="t" id="s3" style="left:73.4px;top:455.5px;font-size:21px;color:#8b95a5;letter-spacing:0.431px;">Inbox</span>
<span class="t" id="s4" style="left:56.2px;top:590.3px;font-size:21px;color:#8b95a5;letter-spacing:0.548px;">My Team</span>
<span class="t" id="s5" style="left:37.6px;top:725.5px;font-size:21px;color:#8b95a5;letter-spacing:0.385px;">My Finances</span>
<span class="t" id="s6" style="left:81.2px;top:860.3px;font-size:21px;color:#8b95a5;letter-spacing:1.042px;">Org</span>
<span class="t" id="s7" style="left:62.0px;top:995.5px;font-size:21px;color:#8b95a5;letter-spacing:0.379px;">Engage</span>
<span class="t" id="s8" style="left:78.6px;top:1130.4px;font-size:21px;color:#8b95a5;letter-spacing:0.928px;">Hire</span>
<span class="t" id="s9" style="left:37.0px;top:1265.5px;font-size:21px;color:#8b95a5;letter-spacing:0.408px;">Performance</span>
<span class="t" id="s10" style="left:65.8px;top:1408.4px;font-size:21px;color:#8b95a5;letter-spacing:0.357px;">Project</span>
<span class="t" id="s11" style="left:41.4px;top:1543.4px;font-size:21px;color:#8b95a5;letter-spacing:0.662px;">Time Attend</span>
<span class="t" id="badge" style="left:120.0px;top:383.1px;font-size:19px;color:#ffffff;letter-spacing:1.298px;">133</span>
<span class="t clip" id="r0n" style="left:274.9px;top:807.4px;width:456.1px;font-size:25px;color:#111827;letter-spacing:0.393px;">Accommodation not owned by Employer</span>
<span class="t clip" id="r1n" style="left:274.9px;top:935.4px;width:456.1px;font-size:25px;color:#111827;letter-spacing:0.311px;">Accommodation Owned by Employer and provided</span>
<span class="t clip" id="r2n" style="left:274.9px;top:1063.4px;width:456.1px;font-size:25px;color:#111827;letter-spacing:0.311px;">Accommodation Owned by Employer and provided</span>

</div>
<script>(function(){var w=window.innerWidth;if(w&&w<2900){document.documentElement.style.zoom=(w/2940)}})();</script>
</body>
</html>
